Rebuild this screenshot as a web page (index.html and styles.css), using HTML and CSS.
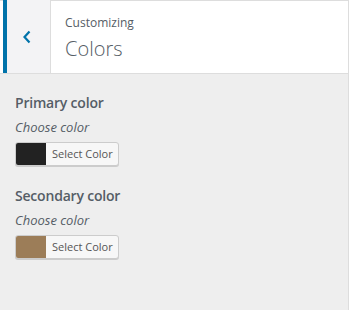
FILE: index.html
```html
<!DOCTYPE html>
<html lang="en">
<head>
  <meta charset="UTF-8" />
  <title>Customizing - Colors</title>
  <link rel="stylesheet" href="styles.css">
</head>
<body>

<div class="panel">
  <header class="panel-head">
    <button class="back-button" aria-label="Back">
      <svg width="10" height="14" viewBox="0 0 10 14">
        <polyline points="7.5,1.5 2.5,7 7.5,12.5" fill="none" stroke="#0073aa" stroke-width="2.2" />
      </svg>
    </button>
    <div class="panel-title">
      <span class="action">Customizing</span>
      <h2>Colors</h2>
    </div>
  </header>

  <div class="controls">
    <div class="control">
      <h3>Primary color</h3>
      <p class="desc">Choose color</p>
      <button class="color-picker">
        <span class="swatch" style="background-color: #222222;"></span>
        <span class="label">Select Color</span>
      </button>
    </div>

    <div class="control">
      <h3>Secondary color</h3>
      <p class="desc">Choose color</p>
      <button class="color-picker">
        <span class="swatch" style="background-color: #9c7d58;"></span>
        <span class="label">Select Color</span>
      </button>
    </div>
  </div>
</div>

</body>
</html>
```

FILE: styles.css
```css
body {
  margin: 0;
  background-color: #eeeeee;
  font-family: "Open Sans", "Noto Sans", sans-serif;
  color: #555d66;
}

.panel {
  height: 310px;
  box-sizing: border-box;
  border-right: 1px solid #dddddd;
}

.panel-head {
  display: flex;
  height: 74px;
  box-sizing: border-box;
  background-color: #ffffff;
  border-top: 1px solid #dddddd;
  border-bottom: 1px solid #dddddd;
  padding-left: 3px;
}

.back-button {
  width: 48px;
  margin: -1px 0 0;
  padding: 0 4px 0 0;
  display: flex;
  align-items: center;
  justify-content: center;
  background-color: #f3f3f5;
  border: none;
  border-left: 4px solid #0073aa;
  border-right: 1px solid #dddddd;
  cursor: pointer;
}

.panel-title {
  padding: 11px 0 0 14px;
}

.action {
  display: block;
  font-size: 12px;
  line-height: 22px;
}

.panel-title h2 {
  margin: 0;
  font-size: 20px;
  font-weight: 300;
  line-height: 30px;
}

.controls {
  padding: 19px 15px 0;
}

.control {
  margin-bottom: 20px;
}

.control h3 {
  margin: 0;
  font-size: 14px;
  font-weight: 600;
  line-height: 20px;
  letter-spacing: -0.2px;
}

.desc {
  margin: 5px 0 0;
  font-size: 13px;
  font-style: italic;
  line-height: 18px;
}

.color-picker {
  display: flex;
  align-items: stretch;
  height: 24px;
  margin-top: 6px;
  padding: 0;
  border: 1px solid #cccccc;
  border-radius: 3px;
  box-shadow: 0 1px 0 #cccccc;
  background-color: #f7f7f7;
  overflow: hidden;
  font-family: inherit;
  cursor: pointer;
}

.swatch {
  width: 30px;
}

.label {
  padding: 0 5px 0 6px;
  font-size: 11px;
  line-height: 22px;
  color: #555555;
}
```
